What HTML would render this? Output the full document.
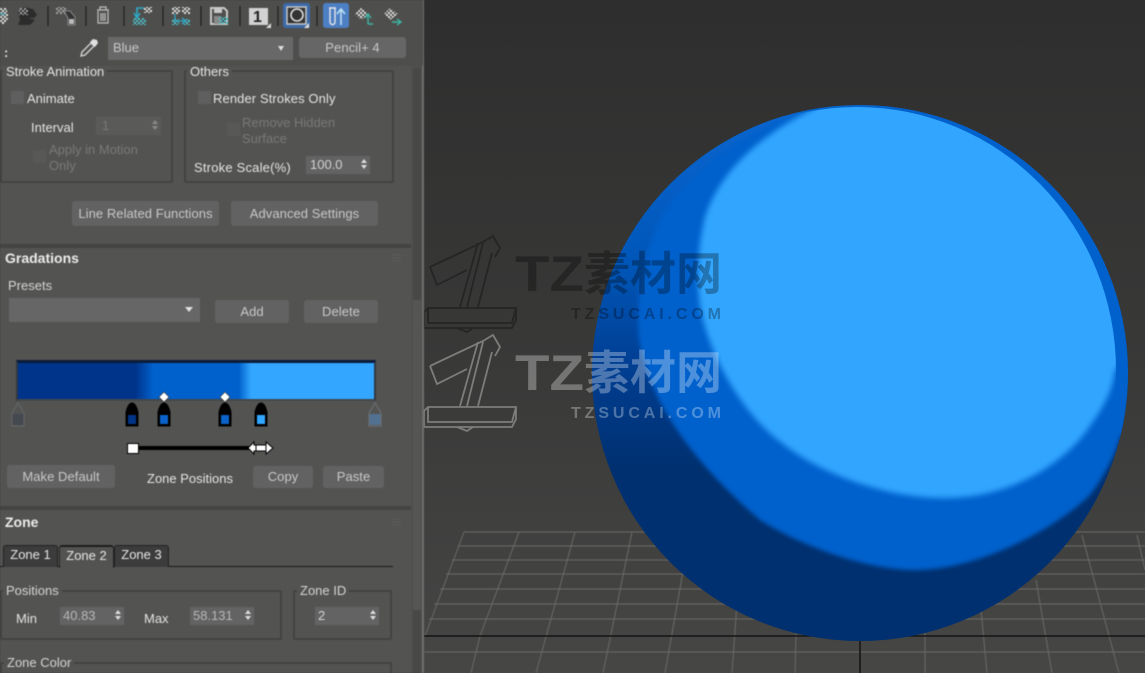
<!DOCTYPE html>
<html><head><meta charset="utf-8"><style>
*{box-sizing:border-box}
html,body{margin:0;padding:0;width:1145px;height:673px;overflow:hidden;background:#3b3b3a}
body{position:relative;font-family:"Liberation Sans","Noto Sans CJK SC",sans-serif;font-size:13px;color:#d8d8d8}
.a{position:absolute;white-space:nowrap}
.t{position:absolute;white-space:nowrap;line-height:16px;color:#e4e4e4}
.d{color:#787878}
.btn{position:absolute;background:#626262;border-radius:3px;color:#c8c8c8;text-align:center;white-space:nowrap;letter-spacing:.06px}
.box{position:absolute;border:2px solid #434442;border-radius:2px}
.f{position:absolute;background:#636363;color:#b8b8b8;padding-left:6px;line-height:17px;height:18px;font-size:13px}
.s{position:absolute;right:2px;top:2px;width:7px;height:13px}
.s:before{content:"";position:absolute;left:0;top:1px;border-left:3.5px solid transparent;border-right:3.5px solid transparent;border-bottom:4px solid #ddd}
.s:after{content:"";position:absolute;left:0;top:7px;border-left:3.5px solid transparent;border-right:3.5px solid transparent;border-top:4px solid #ddd}
.dim:before{border-bottom-color:#8a8a8a}.dim:after{border-top-color:#8a8a8a}
.cb{position:absolute;width:13px;height:13px;background:#5f5f5f}
.hd{position:absolute;font-weight:bold;color:#ececec;font-size:14px;line-height:16px}
.tab{position:absolute;top:545px;height:22px;background:#3c3c3c;border:1px solid #222;border-bottom:none;border-radius:3px 3px 0 0;text-align:center;line-height:18px;color:#e6e6e6;font-size:13px}
#pn{position:absolute;left:0;top:0;width:425px;height:673px;filter:blur(.45px);overflow:hidden}
</style></head><body>

<!-- viewport -->
<svg class="a" style="left:423px;top:0" width="722" height="673" viewBox="423 0 722 673">
<defs>
<linearGradient id="vb" x1="0" y1="0" x2="0" y2="1"><stop offset="0" stop-color="#2e2e2e"/><stop offset=".5" stop-color="#383837"/><stop offset="1" stop-color="#464645"/></linearGradient>
<linearGradient id="dk" gradientUnits="userSpaceOnUse" x1="0" y1="105" x2="0" y2="641"><stop offset="0" stop-color="#0a66d0"/><stop offset=".3" stop-color="#0056b8"/><stop offset=".48" stop-color="#003f94"/><stop offset=".68" stop-color="#00306f"/><stop offset="1" stop-color="#00306f"/></linearGradient>
<clipPath id="sp"><ellipse cx="860" cy="373" rx="268" ry="268"/></clipPath>
<clipPath id="lc"><ellipse cx="857" cy="370" rx="259" ry="263"/></clipPath>
<filter id="b1" x="-10%" y="-10%" width="120%" height="120%"><feGaussianBlur stdDeviation="3"/></filter>
<filter id="b2" x="-10%" y="-10%" width="120%" height="120%"><feGaussianBlur stdDeviation="2"/></filter>
<filter id="b3"><feGaussianBlur stdDeviation=".5"/></filter>
</defs>
<rect x="423" y="0" width="722" height="673" fill="url(#vb)"/>
<g stroke="#6a6a68" stroke-width="1" fill="none" filter="url(#b3)">
<path d="M464 532H1145M458 546H1145M452 560H1145M446 574H1145M440 589H1145M434 604H1145M429 619H1145M424 652H1145"/>
<path d="M464 532L425 636M519 532L480 636L471 673M575 532L536 673M632 532L603 673M690 532L665 673M740 560L732 673M798 560L795 673M925 620V673M981 610L987 673M1036 580L1052 673M1082 535L1119 673M1137 535L1145 570"/>
</g>
<path d="M424 636H1145" stroke="#141414" stroke-width="1.5"/>
<path d="M860 636V673" stroke="#141414" stroke-width="1.5"/>
<ellipse cx="860" cy="373" rx="268" ry="268" fill="url(#dk)"/>
<g clip-path="url(#sp)">
<path d="M814 108C760 125 690 165 660 220C640 260 635 310 640 345C650 400 690 460 760 520C800 545 860 568 910 570C980 572 1060 525 1090 495C1105 475 1115 455 1120 437L1140 420V100Z" fill="#0060cc" filter="url(#b2)"/>
<g clip-path="url(#lc)"><path d="M815 108C770 130 722 165 705 217C695 260 696 300 706 330C720 375 750 420 782 443C815 470 880 498 945 498C1010 498 1060 465 1085 433C1100 412 1112 395 1115 370L1200 300L1100 50L840 80Z" fill="#33a6ff" filter="url(#b1)"/></g>
</g>
<!-- watermark dark -->
<g fill="none" stroke="#252525" stroke-width="1.8">
<path d="M430 267L483 242L493 236L500 248L495 257M430 267L437 285L467 270M478 243L460 307M483 243L467 307M492 253L478 307M428 308H516V320L512 328H424V312ZM428 308V323H512L516 308M457 328L467 332L473 328"/>
</g>
<text x="515" y="291" fill="#000" fill-opacity=".3" font-family="Liberation Sans" font-weight="bold" font-size="50" textLength="69" lengthAdjust="spacingAndGlyphs">TZ</text>
<text x="584" y="290" fill="#000" fill-opacity=".3" font-family="Noto Sans CJK SC" font-weight="bold" font-size="46">素材网</text>
<text x="571" y="319" fill="#000" fill-opacity=".3" font-family="Liberation Sans" font-weight="bold" font-size="16" textLength="150">TZSUCAI.COM</text>
<!-- watermark light -->
<g fill="none" stroke="#7d7d7c" stroke-width="1.8">
<path d="M430 366L483 341L493 335L500 347L495 356M430 366L437 384L467 369M478 342L460 406M483 342L467 406M492 352L478 406M428 407H516V419L512 427H424V411ZM428 407V422H512L516 407M457 427L467 431L473 427"/>
</g>
<text x="515" y="390" fill="#fff" fill-opacity=".3" font-family="Liberation Sans" font-weight="bold" font-size="50" textLength="69" lengthAdjust="spacingAndGlyphs">TZ</text>
<text x="584" y="389" fill="#fff" fill-opacity=".3" font-family="Noto Sans CJK SC" font-weight="bold" font-size="46">素材网</text>
<text x="571" y="418" fill="#fff" fill-opacity=".3" font-family="Liberation Sans" font-weight="bold" font-size="16" textLength="150">TZSUCAI.COM</text>
</svg>

<!-- panel -->
<div id="pn">
<div class="a" style="left:0;top:0;width:423px;height:673px;background:#535452"></div>
<div class="a" style="left:422px;top:0;width:2px;height:673px;background:#6e6f6d"></div>
<div class="a" style="left:411px;top:0;width:11px;height:673px;background:#4f504e"></div>
<div class="a" style="left:413px;top:68px;width:8px;height:232px;background:#484947"></div>
<div class="a" style="left:413px;top:300px;width:8px;height:310px;background:#555654"></div>
<div class="a" style="left:413px;top:610px;width:8px;height:63px;background:#484947"></div>
<div class="a" style="left:0;top:0;width:423px;height:66px;background:#4e4f4d"></div>

<!-- toolbar -->
<svg class="a" style="left:0;top:0" width="423" height="32">
<defs>
<pattern id="ck" width="4" height="4" patternUnits="userSpaceOnUse"><rect width="2" height="2" fill="#e0e0e0"/><rect x="2" y="2" width="2" height="2" fill="#e0e0e0"/></pattern>
<pattern id="ct" width="4" height="4" patternUnits="userSpaceOnUse"><rect width="2" height="2" fill="#4cc0c8"/><rect x="2" y="2" width="2" height="2" fill="#4cc0c8"/></pattern>
<pattern id="cg" width="4" height="4" patternUnits="userSpaceOnUse"><rect width="2" height="2" fill="#a0a0a0"/><rect x="2" y="2" width="2" height="2" fill="#a0a0a0"/></pattern>
</defs>
<path d="M48 6V26M86 6V26M124 6V26M163 6V26M201 6V26M240 6V26M278 6V26M317 6V26" stroke="#1e1e1e" stroke-width="1.2"/>
<path d="M0 8H6L8 13V19L4 24H0Z" fill="url(#ck)"/><rect x="0" y="13" width="5" height="2" fill="#56a0a8"/>
<path d="M18 12L24 7L33 9L37 15L34 18L28 18L35 20L30 25L18 25L20 20Z" fill="#2c2c2c"/>
<path d="M19 8H28V15H19Z" fill="url(#cg)"/>
<path d="M56 7H66V14H56Z" fill="url(#cg)"/>
<path d="M64 11L70 11L75 17V25H68V18Z" fill="#333" stroke="#999" stroke-width=".8"/>
<rect x="69" y="19" width="5" height="5" fill="#bbb"/>
<g fill="none" stroke="#c0c0c0" stroke-width="1.2"><path d="M97 10H109M100 10V7H106V10M98 11V23H108V11M101 13V21M103 13V21M105 13V21"/></g>
<path d="M133 18H146V25H133Z" fill="url(#ct)"/>
<path d="M144 8H137V17M134 13L137 18L140 13" fill="none" stroke="#2fa8c8" stroke-width="1.6"/>
<path d="M144 7H152V13H144Z" fill="url(#ck)"/>
<path d="M172 7H180V14H172ZM182 7H190V14H182Z" fill="url(#ck)"/>
<path d="M172 19H179V25H172ZM183 19H190V25H183Z" fill="url(#ct)"/>
<path d="M175 14V21H185M182 18L186 21L182 24" fill="none" stroke="#2fa8c8" stroke-width="1.3"/>
<path d="M211 8H224L227 11V24H211Z" fill="none" stroke="#c8c8c8" stroke-width="2"/><rect x="214" y="8" width="8" height="5" fill="#c8c8c8"/><rect x="214" y="16" width="7" height="8" fill="#888"/><path d="M219 17H228V24H219Z" fill="url(#ct)"/>
<rect x="249" y="8" width="19" height="17" fill="#d2d2d2"/><text x="253" y="22" font-family="Liberation Sans" font-weight="bold" font-size="16" fill="#222">1</text>
<path d="M266 28L271 28L271 23Z" fill="#ddd"/>
<rect x="283" y="3" width="27" height="25" rx="3" fill="#3c6aa8"/>
<rect x="287" y="7" width="19" height="17" fill="#333" stroke="#c8c8c8" stroke-width="1.5"/><circle cx="297" cy="15" r="6" fill="none" stroke="#ddd" stroke-width="1.6"/>
<path d="M304 28L309 28L309 23Z" fill="#ddd"/>
<rect x="323" y="3" width="26" height="25" rx="3" fill="#4d7fc4"/>
<path d="M329 8H336M330 8V22A2.500 2.500 0 0 0 335 22V8" fill="none" stroke="#e8e8e8" stroke-width="1.4"/><path d="M341 25V10M337 14L341 9L345 14" fill="none" stroke="#bfe4f4" stroke-width="1.5"/>
<path d="M361 8L369 14L361 20L355 14Z" fill="url(#ck)"/>
<path d="M368 24V15M365 18L368 14L371 18M368 24H373" fill="none" stroke="#3db4a4" stroke-width="1.4"/>
<path d="M390 8L398 14L390 20L384 14Z" fill="url(#ck)"/>
<path d="M392 22H400M397 19L401 22L397 25" fill="none" stroke="#3db4a4" stroke-width="1.4"/>
</svg>

<div class="t" style="left:4px;top:45px;font-weight:bold">:</div>
<svg class="a" style="left:78px;top:37px" width="22" height="22"><path d="M3 19L4 15L13 6L16 9L7 18Z" fill="none" stroke="#d8d8d8" stroke-width="1.3"/><path d="M12 5L15 2L19 3L20 6L17 10Z" fill="#e0e0e0"/></svg>
<div class="a" style="left:108px;top:37px;width:185px;height:23px;background:#686868;color:#c8c8c8;padding-left:5px;line-height:22px">Blue</div>
<div class="a" style="left:278px;top:46px;border-left:3px solid transparent;border-right:3px solid transparent;border-top:5px solid #ddd"></div>
<div class="btn" style="left:299px;top:37px;width:107px;height:21px;line-height:21px;background:#666">Pencil+ 4</div>

<!-- stroke animation -->
<div class="a" style="left:0;top:66px;width:411px;height:178px;overflow:hidden">
<div class="box" style="left:0;top:4px;width:173px;height:113px"></div>
<div class="box" style="left:184px;top:4px;width:210px;height:113px"></div>
<div class="t" style="left:3px;top:-2px;background:#535452;padding:0 3px">Stroke Animation</div>
<div class="t" style="left:187px;top:-2px;background:#535452;padding:0 3px">Others</div>
</div>
<div class="cb" style="left:11px;top:91px"></div>
<div class="t" style="left:27px;top:91px">Animate</div>
<div class="t" style="left:31px;top:120px">Interval</div>
<div class="f d" style="left:96px;top:117px;width:65px;background:#5a5b59;color:#787878">1<span class="s dim"></span></div>
<div class="cb" style="left:33px;top:150px;background:#585957"></div>
<div class="t d" style="left:49px;top:142px">Apply in Motion</div>
<div class="t d" style="left:49px;top:158px">Only</div>
<div class="cb" style="left:198px;top:91px"></div>
<div class="t" style="left:213px;top:91px;letter-spacing:.1px">Render Strokes Only</div>
<div class="cb" style="left:227px;top:123px;background:#585957"></div>
<div class="t d" style="left:242px;top:115px">Remove Hidden</div>
<div class="t d" style="left:242px;top:131px">Surface</div>
<div class="t" style="left:194px;top:160px;letter-spacing:.2px">Stroke Scale(%)</div>
<div class="f" style="left:306px;top:156px;width:64px;color:#d4d4d4;padding-left:4px">100.0<span class="s"></span></div>
<div class="btn" style="left:72px;top:201px;width:147px;height:25px;line-height:25px">Line Related Functions</div>
<div class="btn" style="left:231px;top:201px;width:147px;height:25px;line-height:25px">Advanced Settings</div>

<!-- dividers -->
<div class="a" style="left:0;top:244px;width:411px;height:4px;background:#444543"></div>
<div class="a" style="left:0;top:506px;width:411px;height:4px;background:#444543"></div>

<!-- gradations -->
<div class="hd" style="left:5px;top:250px">Gradations</div>
<svg class="a" style="left:393px;top:254px" width="8" height="8"><path d="M0 1H8M0 4H8M0 7H8" stroke="#6a6a6a" stroke-dasharray="1 1.5"/></svg>
<div class="t" style="left:8px;top:278px;color:#d4d4d4">Presets</div>
<div class="a" style="left:9px;top:298px;width:191px;height:24px;background:#666"></div>
<div class="a" style="left:185px;top:307px;border-left:4px solid transparent;border-right:4px solid transparent;border-top:5px solid #e0e0e0"></div>
<div class="btn" style="left:215px;top:300px;width:74px;height:23px;line-height:24px">Add</div>
<div class="btn" style="left:304px;top:300px;width:74px;height:23px;line-height:24px">Delete</div>

<div class="a" style="left:16px;top:360px;width:360px;height:41px;border:2px solid #303842;border-top:3px solid #0a1c3a;border-bottom:2px solid #44484c;background:linear-gradient(90deg,#00348a 0,#00348a 33%,#0060cc 38%,#0060cc 62%,#33a6ff 65.500%,#33a6ff 100%)"></div>

<svg class="a" style="left:0;top:390px" width="411" height="70">
<g stroke="#000" stroke-width="1">
<path d="M164 2L169 7L164 12L159 7Z" fill="#fff" stroke="#333" stroke-width=".6"/><path d="M225 2L230 7L225 12L220 7Z" fill="#fff" stroke="#333" stroke-width=".6"/>
<path d="M126 36V22C127 18 129 13 132 13C135 13 137 18 138 22V36Z" fill="#000"/><rect x="127.500" y="24.500" width="9" height="10" fill="#003487"/>
<path d="M158 36V22C159 18 161 13 164 13C167 13 169 18 170 22V36Z" fill="#000"/><rect x="159.500" y="24.500" width="9" height="10" fill="#0b62c8"/>
<path d="M219 36V22C220 18 222 13 225 13C228 13 230 18 231 22V36Z" fill="#000"/><rect x="220.500" y="24.500" width="9" height="10" fill="#0b62c8"/>
<path d="M255 36V22C256 18 258 13 261 13C264 13 266 18 267 22V36Z" fill="#000"/><rect x="256.500" y="24.500" width="9" height="10" fill="#33a6ff"/>
</g>
<path d="M12 36V23L18 13L24 23V36Z" fill="none" stroke="#646668"/><rect x="12.500" y="24" width="11" height="11" fill="#44484f"/>
<path d="M369 36V23L375 13L381 23V36Z" fill="none" stroke="#6c7074"/><rect x="369.500" y="24" width="11" height="11" fill="#527090"/>
<rect x="132" y="56" width="124" height="4" fill="#000"/>
<rect x="127.500" y="53.500" width="11" height="10" fill="#fff" stroke="#000"/>
<path d="M248 58L254 52V55H266V52L273 58L266 64V61H254V64Z" fill="#fff" stroke="#000"/>
<rect x="256" y="55" width="10" height="6" fill="#fff" stroke="#000" stroke-width="1"/>
</svg>

<div class="btn" style="left:7px;top:465px;width:108px;height:23px;line-height:23px">Make Default</div>
<div class="t" style="left:147px;top:471px">Zone Positions</div>
<div class="btn" style="left:253px;top:466px;width:60px;height:22px;line-height:22px">Copy</div>
<div class="btn" style="left:323px;top:466px;width:61px;height:22px;line-height:22px">Paste</div>

<!-- zone -->
<div class="hd" style="left:5px;top:514px">Zone</div>
<svg class="a" style="left:393px;top:518px" width="8" height="8"><path d="M0 1H8M0 4H8M0 7H8" stroke="#6a6a6a" stroke-dasharray="1 1.5"/></svg>
<div class="a" style="left:0;top:566px;width:393px;height:1px;background:#1a1a1a"></div>
<div class="tab" style="left:3px;width:55px">Zone 1</div>
<div class="tab" style="left:114px;width:55px">Zone 3</div>
<div class="tab" style="left:59px;width:55px;background:#535452;height:23px;border-top:2px solid #1c1c1c">Zone 2</div>

<div class="box" style="left:0;top:590px;width:282px;height:50px"></div>
<div class="t" style="left:3px;top:583px;background:#535452;padding:0 3px;color:#d4d4d4">Positions</div>
<div class="t" style="left:16px;top:611px">Min</div>
<div class="f" style="left:60px;top:607px;width:64px;padding-left:3px">40.83<span class="s"></span></div>
<div class="t" style="left:144px;top:611px">Max</div>
<div class="f" style="left:190px;top:607px;width:64px;padding-left:3px">58.131<span class="s"></span></div>
<div class="box" style="left:293px;top:590px;width:99px;height:50px"></div>
<div class="t" style="left:297px;top:583px;background:#535452;padding:0 3px;color:#d4d4d4">Zone ID</div>
<div class="f" style="left:315px;top:607px;width:64px;padding-left:3px;color:#d4d4d4">2<span class="s"></span></div>
<div class="box" style="left:0;top:662px;width:392px;height:30px"></div>
<div class="t" style="left:4px;top:655px;background:#535452;padding:0 3px;color:#d4d4d4">Zone Color</div>
</div>
</body></html>
